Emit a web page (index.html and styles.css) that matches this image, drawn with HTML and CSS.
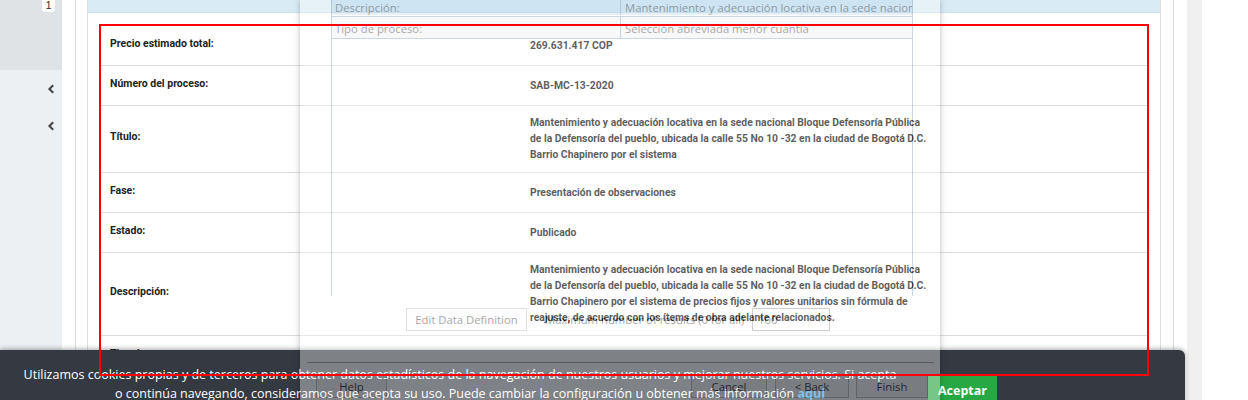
FILE: index.html
```html
<!DOCTYPE html>
<html lang="es">
<head>
<meta charset="utf-8">
<title>Detalle del proceso</title>
<link rel="stylesheet" href="styles.css">
</head>
<body>
<div class="app">
  <aside class="sidebar">
    <div class="sb-top"><span class="badge">1</span></div>
    <nav class="sb-nav">
      <span class="chev"><svg width="8" height="10" viewBox="0 0 8 10"><path d="M6.2 1.2 L2.4 5 L6.2 8.8" fill="none" stroke="#454545" stroke-width="2"/></svg></span>
      <span class="chev"><svg width="8" height="10" viewBox="0 0 8 10"><path d="M6.2 1.2 L2.4 5 L6.2 8.8" fill="none" stroke="#454545" stroke-width="2"/></svg></span>
    </nav>
  </aside>
  <div class="gutter"><div class="gutter-inner"></div></div>
  <main class="panel">
    <div class="panel-head"></div>
    <div class="info">
      <div class="row"><div class="label">Precio estimado total:</div><div class="value">269.631.417 COP</div></div>
      <div class="row"><div class="label">Número del proceso:</div><div class="value">SAB-MC-13-2020</div></div>
      <div class="row"><div class="label">Título:</div><div class="value">Mantenimiento y adecuación locativa en la sede nacional Bloque Defensoría Pública<br>de la Defensoría del pueblo, ubicada la calle 55 No 10 -32 en la ciudad de Bogotá D.C.<br>Barrio Chapinero por el sistema</div></div>
      <div class="row"><div class="label">Fase:</div><div class="value">Presentación de observaciones</div></div>
      <div class="row"><div class="label">Estado:</div><div class="value">Publicado</div></div>
      <div class="row"><div class="label">Descripción:</div><div class="value">Mantenimiento y adecuación locativa en la sede nacional Bloque Defensoría Pública<br>de la Defensoría del pueblo, ubicada la calle 55 No 10 -32 en la ciudad de Bogotá D.C.<br>Barrio Chapinero por el sistema de precios fijos y valores unitarios sin fórmula de<br>reajuste, de acuerdo con los ítems de obra adelante relacionados.</div></div>
      <div class="row"><div class="label">Tipo de proceso:</div><div class="value">Selección abreviada menor cuantía</div></div>
    </div>
  </main>
  <div class="rail"><div class="rail-line"></div><div class="rail-strip"></div></div>
</div>

<div class="cookie">
  <p class="cookie-text"><span class="cl cl1">Utilizamos cookies propias y de terceros para obtener datos estadísticos de la navegación de nuestros usuarios y mejorar nuestros servicios. Si acepta</span><span class="cl cl2">o continúa navegando, consideramos que acepta su uso. Puede cambiar la configuración u obtener más información <a href="#">aquí</a></span></p>
  <button class="accept">Aceptar</button>
</div>

<div class="ghost">
  <div class="g-list">
    <div class="g-row sel"><span class="g-cell first">Descripción:</span><span class="g-cell">Mantenimiento y adecuación locativa en la sede nacional Bloque Defensoría Pública</span></div>
    <div class="g-row alt"><span class="g-cell first">Tipo de proceso:</span><span class="g-cell">Selección abreviada menor cuantía</span></div>
  </div>
  <div class="g-tools">
    <span class="g-btn g-edit">Edit Data Definition</span>
    <span class="g-max">Maximum number of results (0 for all)</span>
    <span class="g-input">100</span>
  </div>
  <div class="g-sep"></div>
  <div class="g-actions">
    <span class="g-btn g-help">Help</span>
    <span class="g-spacer"></span>
    <span class="g-btn g-cancel">Cancel</span>
    <span class="g-btn g-back">&lt; Back</span>
    <span class="g-btn g-finish">Finish</span>
  </div>
</div>

<div class="highlight"></div>
</body>
</html>
```

FILE: styles.css
```css
* { box-sizing: border-box; }
html, body { margin: 0; padding: 0; }
body {
  width: 1248px;
  height: 400px;
  overflow: hidden;
  position: relative;
  background: #fff;
  font-family: Roboto, "Liberation Sans", sans-serif;
}
.app { display: flex; height: 400px; }

/* sidebar */
.sidebar { width: 62px; flex: none; background: #edf0f3; display: flex; flex-direction: column; }
.sb-top { height: 70px; background: #e0e3e5; padding-left: 42px; }
.badge {
  display: block; width: 13px; height: 12px; background: #fff;
  border-radius: 0 0 3px 3px; text-align: center;
  font: 11px/11px "Liberation Sans", sans-serif; color: #333;
}
.sb-nav { display: flex; flex-direction: column; }
.chev { height: 37px; display: flex; align-items: center; justify-content: flex-end; padding-right: 7px; }
.chev svg { display: block; }

.gutter { width: 26px; flex: none; padding-left: 13px; }
.gutter-inner { height: 100%; border-left: 1px solid #dcdfe2; border-right: 1px solid #dcdfe2; }

/* panel */
.panel { width: 1073px; flex: none; border-right: 1px solid #dcdfe2; }
.panel-head { height: 13px; background: #d9ebf5; border-bottom: 1px solid #cfe0ea; }
.info { margin: 13px 12px 0; }
.row {
  display: flex; align-items: center; min-height: 40px;
  padding: 9px 0; border-bottom: 1px solid #dcdcdc;
}
.label {
  flex: none; width: 430px; padding-left: 10px; padding-bottom: 4px;
  font-weight: 700; font-size: 10.5px; line-height: 16px; color: #222;
}
.value {
  font-weight: 700; font-size: 10.35px; line-height: 16px; color: #000; white-space: nowrap;
}

.rail { flex: 1; display: flex; padding-left: 12px; }
.rail-line { width: 1px; background: #dcdfe2; }
.rail-strip { width: 15px; margin-left: 13px; background: #f0f0f0; }

/* cookie banner */
.cookie {
  position: absolute; left: 0; top: 350px; width: 1185px; height: 70px;
  background: #353a42; border-top-right-radius: 6px;
  box-shadow: 0 -1px 5px rgba(0,0,0,.35);
  display: flex; align-items: flex-start; padding-top: 15px; z-index: 10;
}
.cookie-text {
  margin: 0; width: 920px; flex: none; text-align: center; color: #fff;
  font: 12.5px/19px "Open Sans", sans-serif;
}
.cl { display: block; white-space: nowrap; }
.cl2 { padding-left: 20px; }
.cookie-text a { color: #3ea9e6; font-weight: 700; text-decoration: none; }
.accept {
  margin: 11px 0 0 8px; background: #28a745; color: #fff; border: 0;
  font: 700 12.5px/19px "Open Sans", sans-serif; padding: 5px 10px;
}

/* translucent dialog ghost */
.ghost {
  position: absolute; left: 300px; top: 0; width: 640px; height: 420px;
  background: #fff; opacity: .36; box-shadow: 0 0 6px rgba(0,0,0,.7);
  z-index: 20; display: flex; flex-direction: column;
  font: 11.3px "Open Sans", sans-serif; color: #000;
}
.g-list {
  flex: none; margin-left: 31px; width: 582px; height: 296px;
  border-left: 1px solid #6f8fae; border-right: 1px solid #6f8fae;
}
.g-row { display: grid; grid-template-columns: 289px 1fr; }
.g-row.sel { height: 15px; background: #bcd8f0; }
.g-row.alt {
  margin-top: 1px; height: 23px; background: #eeeeee;
  border-top: 1px solid #6f8fae; border-bottom: 1px solid #6f8fae;
}
.g-cell { padding-left: 4px; white-space: nowrap; overflow: hidden; line-height: 15px; }
.g-row.alt .g-cell { line-height: 23px; }
.g-cell.first { padding-left: 3px; border-right: 1px solid #6f8fae; }

.g-tools { flex: none; display: flex; align-items: center; height: 23px; margin-top: 12px; }
.g-btn {
  display: flex; align-items: center; justify-content: center;
  height: 23px; border: 1px solid #adadad; background: #f2f2f2; color: #000;
}
.g-edit { margin-left: 106px; width: 121px; background: #fdfdfd; }
.g-max { margin-left: 18px; width: 207px; white-space: nowrap; }
.g-input {
  width: 78px; height: 23px; border: 1px solid #7a7a7a; padding-left: 5px;
  display: flex; align-items: center;
}
.g-sep { flex: none; margin: 31px 6px 0 7px; border-top: 1px solid #9a9a9a; border-bottom: 1px solid #fff; }
.g-actions { flex: none; display: flex; margin-top: 11px; padding: 0 12px 0 16px; }
.g-help { width: 71px; }
.g-spacer { flex: 1; }
.g-cancel { width: 76px; }
.g-back { width: 74px; margin-left: 8px; }
.g-finish { width: 72px; margin-left: 7px; }

/* red highlight */
.highlight {
  position: absolute; left: 99px; top: 24px; width: 1050px; height: 352px;
  border: 2px solid #f00; z-index: 30;
}
```
